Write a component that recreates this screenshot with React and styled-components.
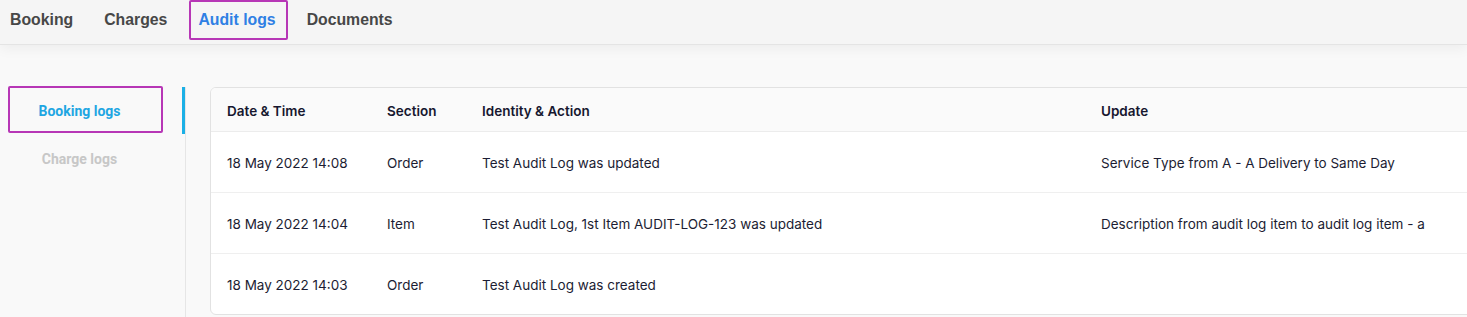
import React from 'react';
import styled, { createGlobalStyle } from 'styled-components';

const GlobalStyle = createGlobalStyle`
  html, body {
    margin: 0;
    padding: 0;
    background: #f9f9f9;
    overflow: hidden;
  }
`;

const Page = styled.div`
  width: 1467px;
  height: 317px;
  overflow: hidden;
  background: #f9f9f9;
`;

const TabBar = styled.nav`
  height: 45px;
  display: flex;
  align-items: center;
  gap: 31px;
  padding-left: 10px;
  background: #f5f5f5;
  border-bottom: 1px solid #e4e4e4;
  box-shadow: 0 4px 12px rgba(0, 0, 0, 0.05);
  box-sizing: border-box;
  position: relative;
  z-index: 1;
`;

const Tab = styled.div`
  position: relative;
  font-family: "Liberation Sans", Arial, sans-serif;
  font-weight: 700;
  font-size: 15.8px;
  line-height: 18px;
  margin-top: -4px;
  color: ${({ $active }) => ($active ? '#2f80e4' : '#474747')};

  ${({ $marked }) => $marked && `
    &::after {
      content: '';
      position: absolute;
      left: -9px;
      right: -12px;
      top: -11px;
      bottom: -11px;
      border: 2px solid #b737b6;
      border-radius: 2px;
    }
  `}
`;

const Body = styled.div`
  display: flex;
  gap: 24px;
  padding-top: 42px;
`;

const Sidebar = styled.aside`
  width: 186px;
  flex-shrink: 0;
  height: 230px;
  border-right: 1px solid #e6e6e6;
  box-sizing: border-box;
  display: flex;
  flex-direction: column;
`;

const SideItem = styled.div`
  position: relative;
  height: 48px;
  padding-right: 26px;
  display: flex;
  align-items: center;
  justify-content: center;
  font-family: Roboto, "Noto Sans", sans-serif;
  font-weight: 700;
  font-size: 14px;
  color: ${({ $active }) => ($active ? '#1ea6e2' : '#c7c7c7')};

  ${({ $active }) => $active && `
    &::before {
      content: '';
      position: absolute;
      right: 0;
      top: 0;
      width: 3px;
      height: 47px;
      background: #1bb0e6;
    }
  `}

  ${({ $marked }) => $marked && `
    &::after {
      content: '';
      position: absolute;
      left: 8px;
      right: 22px;
      top: -1px;
      height: 47px;
      box-sizing: border-box;
      border: 2px solid #b737b6;
      border-radius: 2px;
    }
  `}
`;

const Card = styled.div`
  flex-shrink: 0;
  width: 1400px;
  background: #fff;
  border: 1px solid #e2e2e2;
  border-radius: 6px;
  overflow: hidden;
  align-self: flex-start;
`;

const Table = styled.table`
  width: 100%;
  border-collapse: collapse;
  table-layout: fixed;
  font-family: Inter, Roboto, sans-serif;
  font-size: 13.5px;
`;

const HeadCell = styled.th`
  height: 41px;
  padding: 2px 16px 0;
  text-align: left;
  font-weight: 600;
  color: #16172f;
  background: #fafafa;
  border-bottom: 1px solid #ececec;
  width: ${({ $w }) => $w || 'auto'};
`;

const Row = styled.tr`
  & + & td {
    border-top: 1px solid #efefef;
  }
`;

const Cell = styled.td`
  height: 58px;
  padding: 2px 16px 0;
  color: #1c1d33;
  white-space: nowrap;
`;

const logs = [
  { date: '18 May 2022 14:08', section: 'Order', action: 'Test Audit Log was updated', update: 'Service Type from A - A Delivery to Same Day' },
  { date: '18 May 2022 14:04', section: 'Item', action: 'Test Audit Log, 1st Item AUDIT-LOG-123 was updated', update: 'Description from audit log item to audit log item - a' },
  { date: '18 May 2022 14:03', section: 'Order', action: 'Test Audit Log was created', update: '' },
];

export default function App() {
  return (
    <Page>
      <GlobalStyle />
      <TabBar>
        <Tab>Booking</Tab>
        <Tab>Charges</Tab>
        <Tab $active $marked>Audit logs</Tab>
        <Tab>Documents</Tab>
      </TabBar>
      <Body>
        <Sidebar>
          <SideItem $active $marked>Booking logs</SideItem>
          <SideItem>Charge logs</SideItem>
        </Sidebar>
        <Card>
          <Table>
            <thead>
              <tr>
                <HeadCell $w="128px">Date &amp; Time</HeadCell>
                <HeadCell $w="63px">Section</HeadCell>
                <HeadCell $w="587px">Identity &amp; Action</HeadCell>
                <HeadCell>Update</HeadCell>
              </tr>
            </thead>
            <tbody>
              {logs.map((log) => (
                <Row key={log.date}>
                  <Cell>{log.date}</Cell>
                  <Cell>{log.section}</Cell>
                  <Cell>{log.action}</Cell>
                  <Cell>{log.update}</Cell>
                </Row>
              ))}
            </tbody>
          </Table>
        </Card>
      </Body>
    </Page>
  );
}
